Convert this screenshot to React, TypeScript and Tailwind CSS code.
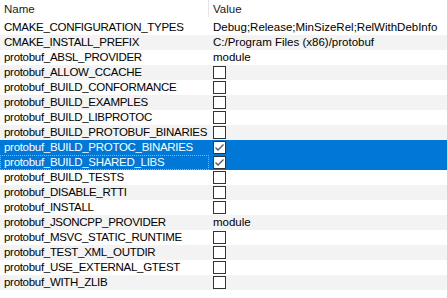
const rows: { name: string; value?: string; checked?: boolean }[] = [
  { name: "CMAKE_CONFIGURATION_TYPES", value: "Debug;Release;MinSizeRel;RelWithDebInfo" },
  { name: "CMAKE_INSTALL_PREFIX", value: "C:/Program Files (x86)/protobuf" },
  { name: "protobuf_ABSL_PROVIDER", value: "module" },
  { name: "protobuf_ALLOW_CCACHE" },
  { name: "protobuf_BUILD_CONFORMANCE" },
  { name: "protobuf_BUILD_EXAMPLES" },
  { name: "protobuf_BUILD_LIBPROTOC" },
  { name: "protobuf_BUILD_PROTOBUF_BINARIES" },
  { name: "protobuf_BUILD_PROTOC_BINARIES", checked: true },
  { name: "protobuf_BUILD_SHARED_LIBS", checked: true },
  { name: "protobuf_BUILD_TESTS" },
  { name: "protobuf_DISABLE_RTTI" },
  { name: "protobuf_INSTALL" },
  { name: "protobuf_JSONCPP_PROVIDER", value: "module" },
  { name: "protobuf_MSVC_STATIC_RUNTIME" },
  { name: "protobuf_TEST_XML_OUTDIR" },
  { name: "protobuf_USE_EXTERNAL_GTEST" },
  { name: "protobuf_WITH_ZLIB" },
];

const CheckBox = ({ checked }: { checked?: boolean }) => {
  return (
    <div className="w-[13px] h-[13px] border border-[#333333] bg-white flex items-center justify-center">
      {checked && (
        <svg width="11" height="11" viewBox="0 0 11 11">
          <path d="M1.5 5.5 L4 8 L9.5 2.5" fill="none" stroke="#555555" strokeWidth="1.3" />
        </svg>
      )}
    </div>
  );
};

const App = () => {
  return (
    <div className="w-[447px] h-[298px] bg-white text-black text-[11.5px] leading-[15px] font-['Liberation_Sans',Arial,sans-serif] overflow-hidden">
      <div className="flex h-[20px]">
        <div className="w-[208px] pl-[4px] pt-[2px] text-[#1a1a1a]">Name</div>
        <div className="w-[1px] h-[17px] bg-[#e5e5e5]" />
        <div className="pl-[4px] pt-[2px] text-[#1a1a1a]">Value</div>
      </div>
      {rows.map((row, index) => {
        const selected = row.checked;
        const focused = index === 9;
        return (
          <div
            key={index}
            className={`flex h-[15px] ${
              selected ? "bg-[#0078d7] text-white" : index % 2 === 1 ? "bg-[#f3f3f3]" : "bg-white"
            }`}
          >
            <div
              className={`w-[209px] shrink-0 pl-[4px] tracking-[-0.3px] whitespace-nowrap ${
                focused ? "outline outline-1 outline-dotted outline-[#f0a040] -outline-offset-1" : ""
              }`}
            >
              {row.name}
            </div>
            <div className="pl-[4px] flex items-center whitespace-nowrap">
              {row.value ? row.value : <CheckBox checked={row.checked} />}
            </div>
          </div>
        );
      })}
    </div>
  );
};

export default App;
